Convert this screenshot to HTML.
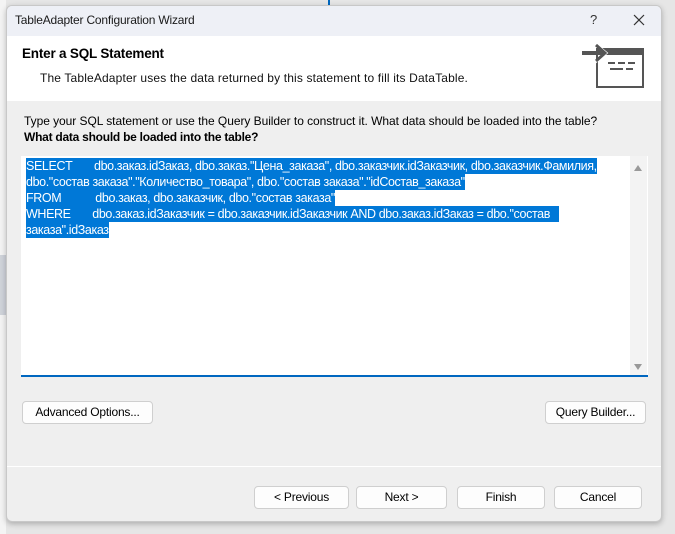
<!DOCTYPE html>
<html><head><meta charset="utf-8"><style>
*{margin:0;padding:0;box-sizing:border-box}
body{width:675px;height:534px;background:#e6e6e6;position:relative;overflow:hidden;font-family:"Liberation Sans",sans-serif;font-size:12px;color:#000}
.abs{position:absolute}
.dlg{left:6px;top:5px;width:656px;height:517px;background:#efefef;border:1px solid #c8c8c8;border-radius:6px;overflow:hidden;box-shadow:0 2px 6px rgba(0,0,0,.25)}
.title{left:0;top:0;width:100%;height:30px;background:#eef0f6}
.hdr{left:0;top:30px;width:100%;height:65px;background:#fff}
.btn{position:absolute;height:23px;background:#fdfdfd;border:1px solid #cfcfcf;border-radius:4px;text-align:center;line-height:21px;font-size:12px;letter-spacing:-0.2px}
.sel{background:#0078d7;color:#fff}
.code{left:20px;top:155px;width:627px;height:221px;background:#fff;border-bottom:2px solid #0067c0}
.code div{position:absolute;left:5px;white-space:nowrap;font-size:12.5px;letter-spacing:-0.38px;line-height:16px;height:16px}
</style></head><body>
<div class="abs" style="left:0;top:0;width:6px;height:534px;background:#f4f4f4"></div>
<div class="abs" style="left:0;top:255px;width:6px;height:60px;background:#cfd3da"></div>
<div class="abs" style="left:328px;top:0;width:2px;height:5px;background:#0067c0"></div>
<div class="abs dlg">
 <div class="abs title"></div>
 <div class="abs" style="left:8px;top:7px;font-size:12px;letter-spacing:-0.2px;color:#1a1a1a">TableAdapter Configuration Wizard</div>
 <div class="abs" style="left:583px;top:6px;font-size:13px;color:#333">?</div>
 <svg class="abs" style="left:626px;top:8px" width="12" height="12"><path d="M1 1L11 11M11 1L1 11" stroke="#333" stroke-width="1.2"/></svg>
 <div class="abs hdr"></div>
 <div class="abs" style="left:15px;top:40px;font-weight:bold;font-size:13.5px;letter-spacing:-0.2px">Enter a SQL Statement</div>
 <div class="abs" style="left:33px;top:65px;font-size:12px;letter-spacing:0.15px;color:#111">The TableAdapter uses the data returned by this statement to fill its DataTable.</div>
 <svg class="abs" style="left:574px;top:35px" width="64" height="50">
  <rect x="16" y="8" width="46" height="38" fill="#fff" stroke="#555" stroke-width="2"/>
  <rect x="15" y="7" width="48" height="7" fill="#555"/>
  <path d="M13 2L25 12L13 22" fill="none" stroke="#fff" stroke-width="3"/>
  <path d="M1 12H22" stroke="#555" stroke-width="4"/>
  <path d="M15 4L24 12L15 20" fill="none" stroke="#555" stroke-width="3"/>
  <path d="M27 22H34M37 22H44M47 22H54M29 28H42M45 28H52" stroke="#555" stroke-width="2"/>
 </svg>
 <div class="abs" style="left:17px;top:108px;font-size:12px;letter-spacing:-0.05px">Type your SQL statement or use the Query Builder to construct it. What data should be loaded into the table?</div>
 <div class="abs" style="left:17px;top:124px;font-size:12px;font-weight:bold;letter-spacing:-0.25px">What data should be loaded into the table?</div>
 <div class="abs code" style="left:14px;top:150px">
  <div style="top:2px" class="sel">SELECT&nbsp;&nbsp;&nbsp;&nbsp;&nbsp;&nbsp;&nbsp;dbo.заказ.idЗаказ, dbo.заказ."Цена_заказа", dbo.заказчик.idЗаказчик, dbo.заказчик.Фамилия,</div>
  <div style="top:18px" class="sel">dbo."состав заказа"."Количество_товара", dbo."состав заказа"."idСостав_заказа"</div>
  <div style="top:34px" class="sel">FROM&nbsp;&nbsp;&nbsp;&nbsp;&nbsp;&nbsp;&nbsp;&nbsp;&nbsp;&nbsp;&nbsp;dbo.заказ, dbo.заказчик, dbo."состав заказа"</div>
  <div style="top:50px" class="sel">WHERE&nbsp;&nbsp;&nbsp;&nbsp;&nbsp;&nbsp;&nbsp;dbo.заказ.idЗаказчик = dbo.заказчик.idЗаказчик AND dbo.заказ.idЗаказ = dbo."состав&nbsp;&nbsp;&nbsp;</div>
  <div style="top:66px" class="sel">заказа".idЗаказ</div>
  <div style="left:609px;top:0;width:17px;height:219px;background:#f3f3f3;letter-spacing:0"></div>
  <svg class="abs" style="left:612px;top:8px" width="10" height="8"><path d="M1 7L5 1L9 7Z" fill="#999"/></svg>
  <svg class="abs" style="left:612px;top:207px" width="10" height="8"><path d="M1 1L5 7L9 1Z" fill="#999"/></svg>
 </div>
 <div class="btn" style="left:15px;top:395px;width:131px">Advanced Options...</div>
 <div class="btn" style="left:538px;top:395px;width:101px">Query Builder...</div>
 <div class="abs" style="left:0;top:460px;width:100%;height:1px;background:#fff"></div>
 <div class="btn" style="left:247px;top:480px;width:95px">&lt; Previous</div>
 <div class="btn" style="left:349px;top:480px;width:91px">Next &gt;</div>
 <div class="btn" style="left:450px;top:480px;width:88px">Finish</div>
 <div class="btn" style="left:547px;top:480px;width:88px">Cancel</div>
</div>
</body></html>
